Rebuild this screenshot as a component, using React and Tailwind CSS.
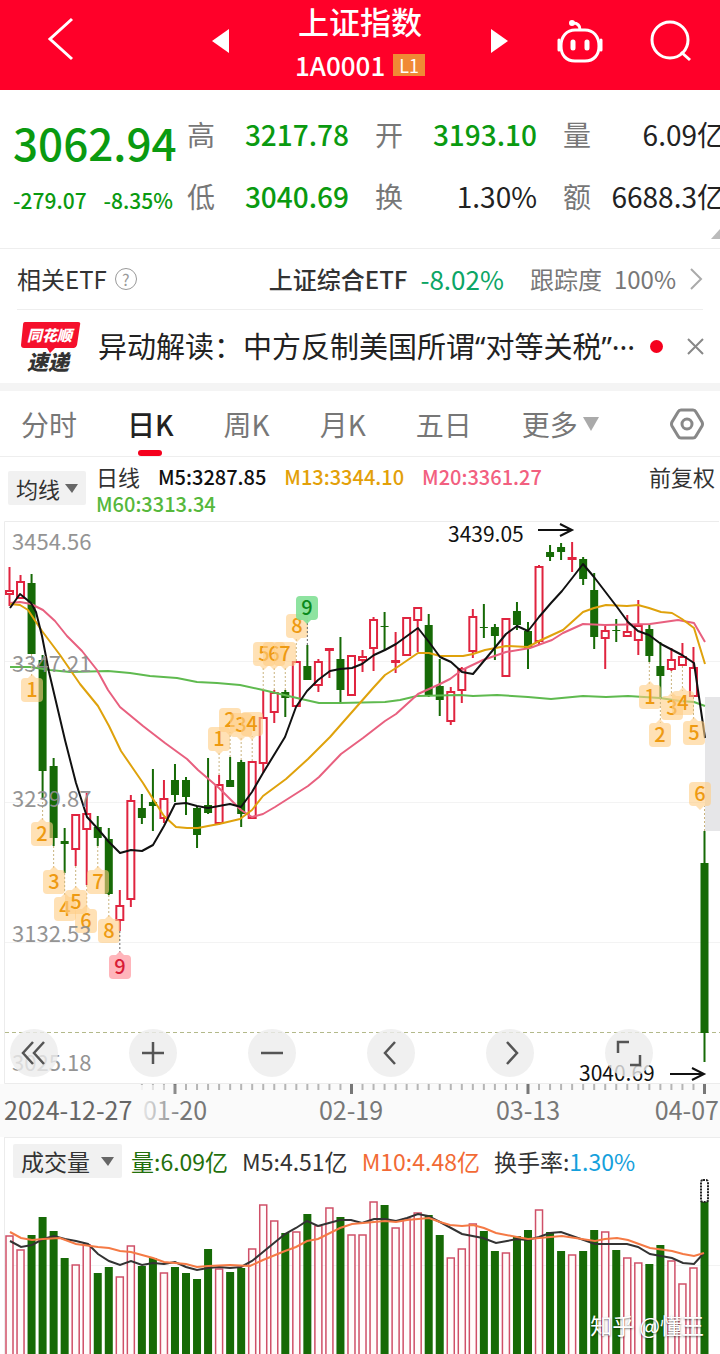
import React, { useState } from "react";

const PASO = 695 / 63;
const posX = (i) => 9.5 + i * PASO;

// [up, high, body top, body bottom, low]
const velas = [
  [1, 567, 591, 594, 606], [1, 575, 582, 598, 598], [0, 574, 583, 654, 654], [0, 655, 660, 771, 798],
  [0, 758, 766, 838, 846], [0, 828, 841, 844, 873], [1, 814, 815, 849, 866], [1, 793, 814, 829, 885],
  [0, 816, 827, 838, 846], [0, 828, 839, 894, 895], [1, 890, 906, 920, 931], [1, 795, 801, 899, 907],
  [0, 794, 808, 818, 824], [0, 769, 802, 806, 831], [1, 780, 799, 818, 823], [0, 764, 780, 795, 802],
  [0, 777, 780, 797, 815], [0, 806, 808, 835, 848], [0, 758, 805, 813, 814], [1, 775, 785, 823, 825],
  [0, 757, 780, 787, 787], [0, 760, 762, 814, 827], [1, 761, 762, 818, 819], [1, 690, 718, 763, 773],
  [1, 690, 693, 712, 723], [0, 690, 692, 698, 717], [1, 661, 662, 706, 707], [0, 645, 666, 680, 680],
  [1, 659, 662, 685, 692], [1, 648, 649, 650, 678], [0, 637, 659, 690, 702], [1, 655, 656, 695, 696],
  [1, 650, 657, 660, 672], [1, 617, 620, 648, 671], [0, 612, 626, 627, 650], [1, 632, 661, 662, 673],
  [1, 617, 618, 655, 656], [1, 607, 608, 620, 652], [0, 614, 625, 695, 697], [0, 659, 686, 700, 716],
  [1, 687, 692, 721, 725], [1, 667, 669, 690, 703], [1, 609, 617, 651, 658], [0, 604, 627, 628, 638],
  [0, 624, 627, 636, 660], [1, 618, 619, 676, 677], [0, 602, 611, 625, 630], [0, 622, 631, 648, 669],
  [1, 565, 567, 641, 644], [0, 545, 552, 557, 561], [0, 543, 547, 552, 560], [1, 542, 558, 559, 572],
  [0, 557, 559, 579, 585], [0, 573, 590, 637, 649], [1, 625, 631, 638, 669], [0, 619, 630, 631, 642],
  [1, 615, 632, 636, 637], [1, 600, 626, 640, 655], [0, 625, 629, 656, 662], [0, 642, 666, 676, 698],
  [1, 648, 660, 669, 671], [1, 643, 657, 665, 666], [1, 647, 668, 696, 697], [0, 831, 863, 1033, 1062],
];

// Bar tops
const volumen = [
  1236, 1250, 1235, 1217, 1231, 1258, 1265, 1245, 1273, 1267, 1277, 1246, 1266, 1258, 1273, 1267,
  1273, 1279, 1249, 1269, 1272, 1268, 1249, 1205, 1221, 1233, 1232, 1214, 1226, 1208, 1217, 1235,
  1235, 1202, 1205, 1228, 1219, 1213, 1215, 1235, 1258, 1249, 1224, 1231, 1251, 1253, 1236, 1230,
  1210, 1232, 1251, 1255, 1251, 1230, 1232, 1250, 1258, 1263, 1264, 1245, 1261, 1284, 1268, 1201,
];

const medias = [
  {
    color: "#5fba4f",
    puntos: "10,667 30,667 50,670 70,672 108,671 130,673 150,676 177,678 197,682 217,683 240,685 263,690 297,698 319,703 340,703 385,702 400,700 417,696 460,695 473,696 497,695 528,697 551,699 583,696 606,697 628,696 660,698 680,701 694,702 705,706",
  },
  {
    color: "#e8607f",
    puntos: "10,603 20,602 31,604 43,610 55,621 67,636 82,651 97,670 108,690 120,707 143,726 165,743 187,759 198,770 219,788 241,810 252,817 263,814 275,807 308,786 319,777 341,754 363,738 385,721 396,714 418,694 440,684 450,679 462,670 483,660 506,652 530,648 552,640 563,633 583,624 605,625 650,624 678,620 694,623 705,642",
  },
  {
    color: "#dfa20c",
    puntos: "10,604 20,605 28,610 42,631 60,655 80,684 98,706 109,726 121,751 132,767 143,783 153,799 164,816 176,827 187,828 198,828 208,826 219,824 240,819 252,810 263,796 286,779 308,759 330,737 352,712 374,687 385,675 396,668 418,653 429,653 440,656 463,656 473,654 485,650 506,646 528,647 539,641 563,630 583,612 594,608 606,605 627,606 638,605 649,608 661,612 672,613 682,619 694,628 705,664",
  },
  {
    color: "#111111",
    puntos: "10,608 20,594 31,603 36,612 42,636 49,672 65,740 76,783 87,817 98,829 109,842 120,853 131,850 142,851 153,845 164,826 175,804 186,803 197,806 208,808 219,806 230,804 241,807 252,792 263,773 285,737 296,707 307,691 318,680 330,671 340,669 352,668 362,664 374,655 385,650 396,644 418,628 429,642 440,657 451,662 462,672 473,674 493,650 506,634 517,626 528,631 539,617 551,603 562,591 573,577 583,564 594,577 617,607 628,622 638,631 649,635 661,644 682,655 694,663 705,738",
  },
];

// [label, x, y, index of its candle]
const marcas = [
  [1, 32, 690, 2], [2, 42, 834, 3], [3, 54, 882, 4], [4, 65, 909, 5], [6, 86, 921, 7], [5, 76, 902, 6],
  [7, 98, 882, 8], [8, 109, 931, 9], [9, 120, 967, 10],
  [1, 219, 739, 19], [2, 230, 720, 20], [3, 241, 725, 21], [4, 252, 724, 22],
  [5, 264, 654, 23], [6, 274, 654, 24], [7, 285, 654, 25], [8, 297, 626, 26], [9, 307, 608, 27],
  [1, 650, 697, 58], [2, 660, 735, 59], [3, 672, 708, 60], [4, 683, 703, 61], [5, 694, 733, 62], [6, 700, 794, 63],
];

const precios = [
  ["3454.56", 550], ["3347.21", 672], ["3239.87", 807], ["3132.53", 942], ["3025.18", 1071],
];

const datos = [
  ["高", "3217.78", true], ["开", "3193.10", true], ["量", "6.09亿", false],
  ["低", "3040.69", true], ["换", "1.30%", false], ["额", "6688.3亿", false],
];

const pestanas = ["分时", "日K", "周K", "月K", "五日"];

function Cabecera() {
  return (
    <header className="grid grid-cols-[1fr_auto_1fr] items-center h-[90px] bg-[#ff0029] text-white">
      <div className="pl-[46px] pb-3">
        <button aria-label="返回" className="block">
          <svg width="28" height="44" viewBox="0 0 28 44" fill="none" stroke="white" strokeWidth="3">
            <path d="M26 2 4 22l22 20" />
          </svg>
        </button>
      </div>
      <div className="flex w-[297px] items-center justify-between">
        <button aria-label="上一个" className="pb-2">
          <svg width="17" height="24" viewBox="0 0 17 24" fill="white"><path d="M17 0v24L0 12z" /></svg>
        </button>
        <div className="pb-1 text-center font-medium">
          <h1 className="text-[31px] leading-[42px] font-medium">上证指数</h1>
          <p className="flex items-center justify-center gap-2 pt-[2px] text-[26px] leading-[42px]">
            1A0001
            <span className="bg-[#f08a35] px-[6px] text-[18px] leading-[22px] font-normal">L1</span>
          </p>
        </div>
        <button aria-label="下一个" className="pb-2">
          <svg width="17" height="24" viewBox="0 0 17 24" fill="white"><path d="M0 0v24l17-12z" /></svg>
        </button>
      </div>
      <div className="flex items-center justify-end gap-[46px] pr-7 pb-2">
        <button aria-label="智能助手">
          <svg width="48" height="44" viewBox="0 0 48 44" fill="none" stroke="white" strokeWidth="3">
            <path d="M19 11h10c8 0 14 6 14 16 0 9-5 15-14 15H19C10 42 5 36 5 27c0-10 6-16 14-16Z" />
            <path d="M24 11c0-4-2-7-7-7" />
            <circle cx="16" cy="4" r="2" fill="white" strokeWidth="2" />
            <path d="M3 21v10M45 21v10" strokeLinecap="round" />
            <path d="M17 23v6M31 23v6" strokeWidth="5" strokeLinecap="round" />
          </svg>
        </button>
        <button aria-label="搜索">
          <svg width="42" height="42" viewBox="0 0 42 42" fill="none" stroke="white" strokeWidth="3">
            <circle cx="20" cy="20" r="18" />
            <path d="m31 32 9 8" />
          </svg>
        </button>
      </div>
    </header>
  );
}

function Resumen() {
  return (
    <section className="relative flex border-b border-[#eeeeee] pt-[13px] pb-[21px] pl-[13px]">
      <div className="w-[174px] shrink-0 font-medium text-[#0a9a10]">
        <p className="text-[44px] leading-[78px]">3062.94</p>
        <p className="flex gap-[17px] text-[21px] leading-[38px]">
          <span>-279.07</span>
          <span>-8.35%</span>
        </p>
      </div>
      <dl className="-mr-[5px] grid flex-1 grid-cols-3 gap-x-[26px]">
        {datos.map(([nombre, valor, verde]) => (
          <div key={nombre} className="flex justify-between whitespace-nowrap text-[28px] leading-[62px]">
            <dt className="w-7 text-[#777777]">{nombre}</dt>
            <dd className={verde ? "font-medium text-[#0a9a10]" : "text-[#222222]"}>{valor}</dd>
          </div>
        ))}
      </dl>
      <svg className="absolute right-0 bottom-[9px]" width="9" height="10" viewBox="0 0 9 10" fill="#bbbbbb">
        <path d="M9 0v10H0z" />
      </svg>
    </section>
  );
}

function FilaEtf() {
  return (
    <section className="mx-[17px] flex h-[61px] items-center border-b border-[#eeeeee] text-[24px] leading-[30px] whitespace-nowrap text-[#333333]">
      <span>相关ETF</span>
      <button aria-label="说明" className="ml-[8px] h-[22px] w-[22px] rounded-full border border-[#999999] text-[16px] leading-[19px] text-[#999999]">?</button>
      <a href="#etf" className="ml-auto flex items-center">
        <span className="font-medium">上证综合ETF</span>
        <span className="ml-[13px] text-[26px] text-[#0ca565]">-8.02%</span>
        <span className="ml-[26px] text-[#777777]">跟踪度</span>
        <span className="ml-[12px] text-[#777777]">100%</span>
        <svg className="ml-[14px]" width="13" height="22" viewBox="0 0 13 22" fill="none" stroke="#aaaaaa" strokeWidth="2">
          <path d="m1 1 10 10L1 21" />
        </svg>
      </a>
    </section>
  );
}

function Noticia() {
  return (
    <section className="flex h-[73px] items-center pr-4 pl-[21px]">
      <svg width="60" height="52" viewBox="0 0 60 52" className="shrink-0 font-black italic">
        <path d="M4 1h53q3 0 2 3l-3 20q-1 3-3 3H34l-5 5-3-5H3q-3 0-3-3L2 4q0-3 2-3Z" fill="#f5102c" />
        <text x="6" y="20" fontSize="15" fill="white">同花顺</text>
        <text x="6" y="49" fontSize="21" fill="#333333">速递</text>
      </svg>
      <a
        href="#noticia"
        className="ml-[17px] flex-1 overflow-hidden font-['Noto_Sans','Noto_Sans_CJK_SC',sans-serif] text-[29px] leading-[40px] whitespace-nowrap text-[#222222]"
      >
        异动解读：中方反制美国所谓“对等关税”···
      </a>
      <span className="h-[13px] w-[13px] shrink-0 rounded-full bg-[#f5001d]" />
      <button aria-label="关闭" className="ml-[24px] shrink-0">
        <svg width="17" height="17" viewBox="0 0 17 17" stroke="#888888" strokeWidth="2">
          <path d="m1 1 15 15M16 1 1 16" />
        </svg>
      </button>
    </section>
  );
}

function Pestanas() {
  const [activa, setActiva] = useState("日K");
  return (
    <nav className="flex h-[66px] items-stretch gap-[50px] border-b border-[#eeeeee] pr-4 pl-[21px] text-[28px] whitespace-nowrap text-[#777777]">
      {pestanas.map((p) => (
        <button
          key={p}
          onClick={() => setActiva(p)}
          className={p === activa ? "relative font-medium text-[#222222]" : "relative"}
        >
          {p}
          {p === activa && (
            <span className="absolute bottom-0 left-1/2 h-[6px] w-6 -translate-x-1/2 rounded-full bg-[#f5001d]" />
          )}
        </button>
      ))}
      <button className="flex items-center gap-[5px]">
        更多
        <svg width="16" height="14" viewBox="0 0 16 14" fill="#aaaaaa"><path d="M0 0h16L8 14z" /></svg>
      </button>
      <button aria-label="设置" className="ml-auto">
        <svg width="34" height="32" viewBox="0 0 34 32" fill="none" stroke="#888888" strokeWidth="3">
          <path d="M11 2h12q2 0 3 2l6 10q1 2 0 4l-6 10q-1 2-3 2H11q-2 0-3-2L2 18q-1-2 0-4L8 4q1-2 3-2Z" />
          <circle cx="17" cy="16" r="5" />
        </svg>
      </button>
    </nav>
  );
}

function Selector({ etiqueta, opciones, ancho }) {
  return (
    <div className={`relative shrink-0 ${ancho}`}>
      <select
        aria-label={etiqueta}
        className="block h-[34px] w-full appearance-none rounded-xs bg-[#f1f1f1] pl-2 leading-[34px] text-[#333333]"
      >
        {opciones.map((o) => (
          <option key={o}>{o}</option>
        ))}
      </select>
      <svg className="pointer-events-none absolute top-[13px] right-2" width="13" height="9" viewBox="0 0 13 9" fill="#666666">
        <path d="M0 0h13L7 9z" />
      </svg>
    </div>
  );
}

function Indicadores() {
  return (
    <section className="flex h-[64px] pr-[5px] pl-2 text-[22px] text-[#333333]">
      <div className="pt-[14px]">
        <Selector etiqueta="指标" opciones={["均线", "BOLL"]} ancho="w-[78px]" />
      </div>
      <p className="ml-[10px] flex flex-1 flex-wrap content-start gap-x-[18px] pt-[6px] text-[20px] leading-[27px] font-medium">
        <span className="text-[22px] font-normal">日线</span>
        <span className="text-[#111111]">M5:3287.85</span>
        <span className="text-[#e3a008]">M13:3344.10</span>
        <span className="text-[#f2607f]">M20:3361.27</span>
        <span className="text-[#56b83c]">M60:3313.34</span>
      </p>
      <button className="self-start pt-[6px] leading-[27px] whitespace-nowrap">前复权</button>
    </section>
  );
}

function Vela({ i, vela }) {
  const [sube, alto, arriba, abajo, bajo] = vela;
  const x = posX(i);
  if (!sube) {
    return (
      <g fill="#166a06">
        <rect x={x - 1} y={alto} width="2" height={bajo - alto} />
        <rect x={x - 4} y={arriba} width="8" height={abajo - arriba} />
      </g>
    );
  }
  return (
    <g stroke="#e0243f" strokeWidth="2" fill="white">
      <path d={`M${x} ${alto}V${bajo}`} />
      <rect x={x - 3.5} y={arriba} width="7" height={abajo - arriba} />
    </g>
  );
}

function Marca({ n, x, y, i }) {
  const nueve = n === 9;
  const debajo = y > velas[i][4];
  const fondo = !nueve ? "#ffce85" : debajo ? "#ffaeb4" : "#82e096";
  const texto = !nueve ? "#ee9a12" : debajo ? "#d81b36" : "#0b8a1c";
  const punta = debajo ? `M${x - 4} ${y - 12}h8l-4-4z` : `M${x - 4} ${y + 12}h8l-4 4z`;
  return (
    <g>
      <path
        d={debajo ? `M${posX(i)} ${velas[i][4]}V${y - 12}` : `M${posX(i)} ${velas[i][1]}V${y + 12}`}
        stroke={nueve ? "#666666" : "#c9b37e"}
        strokeDasharray="2 2"
      />
      <g fill={fondo} opacity={nueve ? 0.9 : 0.6}>
        <rect x={x - 11} y={y - 12} width="22" height="24" rx="4" />
        <path d={punta} />
      </g>
      <text x={x} y={y + 7} textAnchor="middle" fontSize="20" fontWeight="500" fill={texto}>{n}</text>
    </g>
  );
}

function GraficoVelas() {
  const ticks = velas.map((_, i) => i).filter((i) => i >= 12);
  return (
    <svg viewBox="0 521 720 616" className="block h-auto w-full">
      <defs>
        <linearGradient id="desvanecer" x1="0" x2="1">
          <stop offset="0" stopColor="#fafafa" />
          <stop offset="1" stopColor="#fafafa" stopOpacity="0" />
        </linearGradient>
      </defs>
      <rect x="0" y="1084" width="720" height="53" fill="#fafafa" />
      <g stroke="#ececec">
        <path d="M4.500 1083.500V521.500H719M4.500 1083.500H720" fill="none" />
        <path d="M5 661.500H720M5 802.500H720M5 942.500H720" stroke="#f3f3f3" />
      </g>
      <rect x="705" y="697" width="15" height="134" fill="#e6e6e8" />
      <path d="M5 1032.500H720" stroke="#b3b98a" strokeDasharray="4 3" />

      {velas.map((v, i) => (
        <Vela key={i} i={i} vela={v} />
      ))}
      {medias.map((m) => (
        <polyline
          key={m.color}
          points={m.puntos}
          fill="none"
          stroke={m.color}
          strokeWidth="2"
          strokeLinejoin="round"
        />
      ))}
      {marcas.map(([n, x, y, i]) => (
        <Marca key={`${n}-${i}`} n={n} x={x} y={y} i={i} />
      ))}

      <g fontSize="22" fill="#8f8f8f" opacity="0.95">
        {precios.map(([p, y]) => (
          <text key={p} x="12" y={y}>{p}</text>
        ))}
      </g>
      <g fontSize="21" fill="#111111">
        <text x="448" y="542">3439.05</text>
        <text x="579" y="1081">3040.69</text>
      </g>
      <g fill="none" stroke="#111111" strokeWidth="2">
        <path d="M538 530h33M560 524l12 6-12 6" />
        <path d="M670 1074h34M692 1068l12 6-12 6" />
      </g>

      {ticks.map((i) => (
        <path
          key={i}
          d={`M${posX(i)} 1084v${(i - 15) % 16 === 0 ? 10 : 6}`}
          stroke={(i - 15) % 16 === 0 ? "#777777" : "#b5b5b5"}
          strokeWidth={(i - 15) % 16 === 0 ? 3 : 2}
        />
      ))}
      <g fontSize="25" fill="#777777">
        <text x="175" y="1120" textAnchor="middle">01-20</text>
        <text x="351" y="1120" textAnchor="middle">02-19</text>
        <text x="528" y="1120" textAnchor="middle">03-13</text>
        <text x="719" y="1120" textAnchor="end">04-07</text>
      </g>
      <rect x="136" y="1085" width="46" height="46" fill="url(#desvanecer)" />
      <text x="4" y="1120" fontSize="25" fill="#666666">2024-12-27</text>
    </svg>
  );
}

const controles = [
  ["最早", "M23 13 13 24l10 11M34 13 24 24l10 11"],
  ["放大", "M24 13v22M13 24h22"],
  ["缩小", "M13 24h22"],
  ["左移", "M28 13 18 24l10 11"],
  ["右移", "M21 13l10 11-10 11"],
  ["全屏", "M13 24V13h11M35 26v10H25"],
];

function Controles() {
  return (
    <div className="absolute right-[67px] bottom-[60px] left-[10px] flex justify-between">
      {controles.map(([nombre, d]) => (
        <button key={nombre} aria-label={nombre} className="h-12 w-12 rounded-full bg-[#ececec]/80">
          <svg width="48" height="48" viewBox="0 0 48 48" fill="none" stroke="#555555" strokeWidth="2.500">
            <path d={d} />
          </svg>
        </button>
      ))}
    </div>
  );
}

function Volumen() {
  return (
    <section className="relative">
      <div className="ml-1 flex h-[42px] items-center border-t border-l border-[#ececec] pt-1 pl-2 text-[23px] leading-[34px] whitespace-nowrap text-[#333333]">
        <Selector etiqueta="副图指标" opciones={["成交量", "MACD"]} ancho="w-[109px]" />
        <p className="ml-[9px] flex gap-[14px]">
          <span className="text-[#23700c]">量:6.09亿</span>
          <span>M5:4.51亿</span>
          <span className="text-[#f26a35]">M10:4.48亿</span>
          <span>换手率:<span className="text-[#14a0dc]">1.30%</span></span>
        </p>
      </div>
      <svg viewBox="0 1179 720 175" className="block h-auto w-full">
        <path d="M4.500 1179V1354" stroke="#ececec" />
        <path d="M5 1265.500H720" stroke="#f3f3f3" />
        {volumen.map((y, i) =>
          velas[i][0] ? (
            <rect key={i} x={posX(i) - 3.5} y={y} width="7" height="180" fill="#fffcfb" stroke="#cf5068" strokeWidth="1.500" />
          ) : (
            <rect key={i} x={posX(i) - 4} y={y} width="8" height="180" fill="#166a06" />
          )
        )}
        <rect x="701" y="1180" width="7" height="22" rx="2" fill="white" stroke="#222222" strokeWidth="2" strokeDasharray="2 1" />
        <polyline
          fill="none"
          stroke="#333333"
          strokeWidth="2"
          points="10,1241 21,1247 32,1245 43,1239 54,1236 65,1239 76,1241 88,1244 98,1254 109,1261 120,1265 131,1261 142,1265 153,1263 164,1264 175,1262 186,1267 197,1270 208,1268 219,1267 230,1268 241,1267 252,1261 263,1252 274,1243 285,1234 296,1228 307,1221 318,1226 329,1223 340,1220 351,1220 362,1223 374,1219 385,1219 396,1221 407,1218 418,1214 428,1216 440,1222 462,1234 483,1238 496,1243 507,1241 517,1239 527,1240 539,1237 550,1233 561,1232 578,1238 595,1244 627,1244 638,1247 650,1254 672,1258 683,1263 694,1264 704,1253"
        />
        <polyline
          fill="none"
          stroke="#f57a45"
          strokeWidth="2"
          points="10,1232 21,1238 32,1240 43,1239 60,1238 76,1244 98,1247 109,1248 120,1251 131,1252 142,1255 153,1258 164,1262 186,1264 197,1267 208,1266 230,1265 250,1266 263,1260 285,1251 296,1247 307,1241 318,1239 340,1228 352,1224 363,1223 385,1221 396,1222 407,1220 429,1218 440,1222 450,1225 462,1226 473,1225 484,1228 496,1233 517,1237 528,1239 562,1236 595,1241 605,1239 617,1238 628,1240 639,1244 650,1248 672,1251 683,1254 694,1256 704,1253"
        />
      </svg>
      <p className="absolute right-4 bottom-[14px] text-[22px] leading-[32px] text-white [text-shadow:0_1px_2px_#00000080]">
        知乎 @懂王
      </p>
    </section>
  );
}

export default function App() {
  return (
    <main lang="zh-CN" className="overflow-hidden bg-white font-['Noto_Sans_CJK_SC',sans-serif]">
      <Cabecera />
      <Resumen />
      <FilaEtf />
      <Noticia />
      <div className="h-2 bg-[#f4f4f4]" />
      <Pestanas />
      <Indicadores />
      <section className="relative">
        <GraficoVelas />
        <Controles />
      </section>
      <Volumen />
    </main>
  );
}
